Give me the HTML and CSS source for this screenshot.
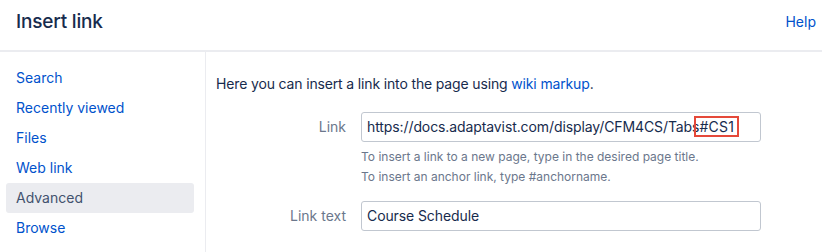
FILE: index.html
```html
<!DOCTYPE html>
<html lang="en">
<head>
  <meta charset="UTF-8">
  <meta name="viewport" content="width=device-width, initial-scale=1.0">
  <title>Insert link</title>
  <link rel="stylesheet" href="styles.css">
</head>
<body>
  <div class="dialog">
    <div class="dialog-header">
      <h2 class="title">Insert link</h2>
      <a href="javascript:;" class="help">Help</a>
    </div>
    <div class="dialog-body">
      <ul class="menu">
        <li><a href="javascript:;">Search</a></li>
        <li><a href="javascript:;">Recently viewed</a></li>
        <li><a href="javascript:;">Files</a></li>
        <li><a href="javascript:;">Web link</a></li>
        <li><a href="javascript:;" class="active">Advanced</a></li>
        <li><a href="javascript:;">Browse</a></li>
      </ul>
      <div class="panel">
        <p class="intro">Here you can insert a link into the page using <a href="javascript:;">wiki markup</a>.</p>
        <div class="field">
          <label class="label">Link</label>
          <div class="control">
            <div class="input">https://docs.adaptavist.com/display/CFM4CS/Tabs<span class="mark">#CS1</span></div>
            <div class="desc first">To insert a link to a new page, type in the desired page title.</div>
            <div class="desc">To insert an anchor link, type #anchorname.</div>
          </div>
        </div>
        <div class="field">
          <label class="label">Link text</label>
          <div class="control">
            <div class="input">Course Schedule</div>
          </div>
        </div>
      </div>
    </div>
  </div>
</body>
</html>
```

FILE: styles.css
```css
* {
  box-sizing: border-box;
}
body {
  margin: 0;
  background: #fff;
  font-family: Inter, "Noto Sans", sans-serif;
  font-size: 14px;
  color: #172b4d;
}
a {
  color: #0052cc;
  text-decoration: none;
}
.dialog-header {
  height: 52px;
  border-bottom: 2px solid #ebecf0;
  display: flex;
  align-items: center;
  justify-content: space-between;
  padding: 0 6px 8px 16px;
}
.title {
  margin: 0;
  font-size: 19px;
  font-weight: 500;
  letter-spacing: -0.2px;
  color: #172b4d;
}
.help {
  font-size: 14px;
}
.dialog-body {
  display: flex;
  height: 200px;
}
.menu {
  list-style: none;
  margin: 0;
  padding: 11px 0 0 6px;
  width: 206px;
  border-right: 1px solid #ebecf0;
}
.menu a {
  display: block;
  width: 188px;
  height: 30px;
  line-height: 30px;
  padding-left: 10px;
  border-radius: 3px;
}
.menu a.active {
  background: #ebecf0;
  color: #42526e;
}
.panel {
  padding: 22px 0 0 10px;
  flex: 1;
}
.intro {
  margin: 0 0 18px;
  line-height: 20px;
  letter-spacing: -0.15px;
}
.field {
  display: flex;
  margin-bottom: 14px;
}
.label {
  width: 145px;
  text-align: right;
  padding-right: 15px;
  line-height: 30px;
  color: #6b778c;
}
.input {
  width: 400px;
  height: 30px;
  line-height: 28px;
  border: 1px solid #c1c7d0;
  border-radius: 3px;
  padding: 0 5px;
  color: #172b4d;
  white-space: nowrap;
  letter-spacing: -0.1px;
}
.mark {
  outline: 2px solid #e5493a;
  outline-offset: 0;
  margin-left: -3px;
  padding: 0 3px;
  letter-spacing: 0.3px;
}
.desc {
  font-size: 12px;
  line-height: 20px;
  color: #6b778c;
}
.desc.first {
  margin-top: 5px;
}
```
